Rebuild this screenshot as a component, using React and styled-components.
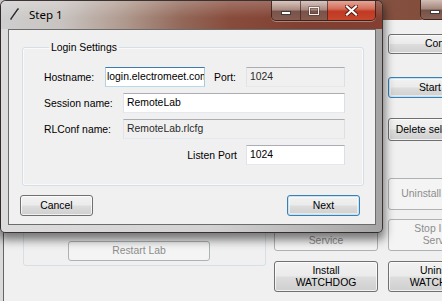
import React from "react";
import styled, { createGlobalStyle, css } from "styled-components";

const GlobalStyle = createGlobalStyle`
  html, body {
    margin: 0;
    padding: 0;
  }
  body {
    width: 442px;
    height: 301px;
    overflow: hidden;
    background: #f0f0f0;
    font-family: "Liberation Sans", Arial, sans-serif;
  }
`;

const Desktop = styled.div`
  position: relative;
  width: 442px;
  height: 301px;
  overflow: hidden;
`;

/* ---------- window behind the dialog ---------- */

const BgWindow = styled.div`
  display: flex;
  flex-direction: column;
  width: 560px;
  height: 301px;
  box-sizing: border-box;
  border-left: 3px solid #dadada;
`;

const BgTitleBar = styled.div`
  flex: none;
  height: 20px;
  display: flex;
  align-items: flex-start;
  padding-left: 417px;
  background: linear-gradient(90deg, #b9b5b2 0%, #9c8478 45%, #85503f 70%, #7e4333 100%);
`;

const BgClient = styled.div`
  flex: 1;
  display: flex;
  align-items: flex-start;
  background: #f0f0f0;
  border-left: 1px solid #646464;
`;

const BgGroup = styled.div`
  box-sizing: border-box;
  width: 243px;
  height: 226px;
  margin: 20px 0 0 19px;
  border: 1px solid #d5dfe5;
  border-radius: 3px;
  display: flex;
  align-items: flex-end;
  padding: 0 0 4px 44px;
`;

const ButtonColumn = styled.div`
  display: flex;
  flex-direction: column;
  width: 104px;
  margin-left: ${props => props.$gap}px;
`;

/* ---------- shared controls ---------- */

const Button = styled.button`
  box-sizing: border-box;
  width: ${props => (props.$w ? `${props.$w}px` : "100%")};
  height: ${props => props.$h || 21}px;
  margin-top: ${props => props.$mt || 0}px;
  padding: 0 2px;
  border: 1px solid #707070;
  border-radius: 3px;
  background: linear-gradient(180deg, #f2f2f2 0%, #ebebeb 48%, #dddddd 52%, #cfcfcf 100%);
  box-shadow: inset 0 0 0 1px rgba(255, 255, 255, 0.7);
  font-family: "Liberation Sans", Arial, sans-serif;
  font-size: 10.4px;
  line-height: 12px;
  color: #000;
  white-space: pre-line;
  overflow: hidden;
  ${props =>
    props.$default &&
    css`
      border-color: #3c7fb1;
      box-shadow: inset 0 0 0 1px #c4e5f6, inset 0 0 0 2px rgba(255, 255, 255, 0.5);
    `}
  ${props =>
    props.disabled &&
    css`
      border-color: #adb2b5;
      background: #f4f4f4;
      box-shadow: none;
      color: #8d8d8d;
    `}
`;

const CaptionGroup = styled.div`
  display: flex;
  height: 19px;
  border: 1px solid rgba(40, 25, 20, 0.75);
  border-top: none;
  border-radius: 0 0 5px 5px;
  overflow: hidden;
  box-shadow: 0 1px 0 rgba(255, 255, 255, 0.35);
`;

const CaptionButton = styled.div`
  width: ${props => props.$w}px;
  height: 19px;
  display: flex;
  align-items: center;
  justify-content: center;
  border-left: ${props => (props.$first ? "none" : "1px solid rgba(40, 25, 20, 0.6)")};
  background: ${props =>
    props.$close
      ? "linear-gradient(180deg, #e6a495 0%, #d3705c 40%, #c13a23 55%, #c6462c 100%)"
      : "linear-gradient(180deg, rgba(235,228,224,0.75) 0%, rgba(190,175,168,0.6) 45%, rgba(110,85,78,0.65) 55%, rgba(140,110,100,0.6) 100%)"};
`;

/* ---------- dialog ---------- */

const Dialog = styled.div`
  position: absolute;
  left: 0;
  top: 0;
  width: 383px;
  height: 233px;
  box-sizing: border-box;
  display: flex;
  flex-direction: column;
  border: 1px solid rgba(30, 22, 20, 0.85);
  border-radius: 6px 6px 5px 5px;
  overflow: hidden;
  background: linear-gradient(90deg, #dcdcdc 0%, #d2d2d2 55%, #a4a4a4 100%);
  box-shadow: 0 5px 10px 2px rgba(0, 0, 0, 0.5);
`;

const TitleBar = styled.div`
  flex: none;
  height: 28px;
  display: flex;
  align-items: flex-start;
  padding: 0 6px 0 9px;
  background: linear-gradient(180deg, rgba(255, 255, 255, 0.22) 0%, rgba(255, 255, 255, 0) 60%),
    linear-gradient(90deg, #cfcfcf 0%, #c8c3c0 16%, #b09a8f 32%, #93695a 47%, #884c3c 60%, #803f31 80%, #843f30 100%);
`;

const TitleIcon = styled.svg`
  flex: none;
  margin-top: 7px;
`;

const TitleText = styled.div`
  margin: 5px 0 0 10px;
  font-family: "Noto Sans", "Open Sans", sans-serif;
  font-size: 11.5px;
  line-height: 17px;
  color: #000;
`;

const TitleSpacer = styled.div`
  flex: 1;
`;

const Frame = styled.div`
  flex: 1;
  display: flex;
  padding: 0 6px 7px 7px;
`;

const Client = styled.div`
  flex: 1;
  box-sizing: border-box;
  display: flex;
  flex-direction: column;
  background: #f0f0f0;
  border: 1px solid #6c6c6c;
`;

const Group = styled.fieldset`
  margin: 11px 11px 0 13px;
  padding: 13px 18px 20px 21px;
  border: 1px solid #d5dfe5;
  border-radius: 3px;
  box-shadow: inset 0 0 0 1px rgba(255, 255, 255, 0.6);
  display: flex;
  flex-direction: column;
  gap: 6px;
  min-width: 0;
`;

const Legend = styled.legend`
  margin-left: 5px;
  padding: 0 2px;
  font-size: 10.4px;
  line-height: 13px;
  color: #000;
`;

const Row = styled.div`
  display: flex;
  align-items: center;
  justify-content: ${props => (props.$end ? "flex-end" : "flex-start")};
  height: 20px;
`;

const Label = styled.label`
  flex: none;
  width: ${props => (props.$w ? `${props.$w}px` : "auto")};
  margin-left: ${props => props.$ml || 0}px;
  margin-right: ${props => props.$mr || 0}px;
  font-size: 10.4px;
  color: #000;
  white-space: nowrap;
`;

const Field = styled.div`
  box-sizing: border-box;
  flex: ${props => (props.$w ? "none" : 1)};
  width: ${props => (props.$w ? `${props.$w}px` : "auto")};
  height: 20px;
  padding-left: ${props => (props.$pl != null ? props.$pl : 3)}px;
  border: 1px solid;
  border-color: #abadb3 #dbdfe6 #e3e9ef #e2e3ea;
  background: ${props => (props.$readOnly ? "#f0f0f0" : "#fff")};
  font-size: 10.4px;
  line-height: 18px;
  color: ${props => (props.$readOnly ? "#2a2a2a" : "#000")};
  white-space: nowrap;
  overflow: hidden;
  ${props =>
    props.$focused &&
    css`
      border-color: #3d7bad #a4c9e3 #b7d9ed #b5cfe7;
    `}
`;

const Scrolled = styled.span`
  display: inline-block;
  margin-left: ${props => props.$shift}px;
`;

const DialogButtons = styled.div`
  display: flex;
  justify-content: space-between;
  margin-top: 9px;
  padding: 0 15px 0 11px;
`;

const MinGlyph = () => (
  <svg width="12" height="12" viewBox="0 0 12 12">
    <rect x="1.5" y="6.5" width="9" height="3" fill="#fff" stroke="#3b3b3b" strokeWidth="1" />
  </svg>
);

const MaxGlyph = () => (
  <svg width="12" height="10" viewBox="0 0 12 10">
    <rect x="1.5" y="1.5" width="9" height="7" fill="none" stroke="rgba(60,50,45,0.55)" strokeWidth="2.4" />
    <rect x="1.5" y="1.5" width="9" height="7" fill="none" stroke="#f4f0ee" strokeWidth="1" />
  </svg>
);

const CloseGlyph = () => (
  <svg width="13" height="11" viewBox="0 0 13 11">
    <path d="M2 1.5 L11 9.5 M11 1.5 L2 9.5" stroke="#5a1a10" strokeWidth="4" strokeLinecap="square" />
    <path d="M2 1.5 L11 9.5 M11 1.5 L2 9.5" stroke="#fff" strokeWidth="2.2" strokeLinecap="square" />
  </svg>
);

const App = () => (
  <Desktop>
    <GlobalStyle />

    <BgWindow>
      <BgTitleBar>
        <CaptionGroup>
          <CaptionButton $w={28} $first>
            <MinGlyph />
          </CaptionButton>
          <CaptionButton $w={26}>
            <MaxGlyph />
          </CaptionButton>
          <CaptionButton $w={46} $close>
            <CloseGlyph />
          </CaptionButton>
        </CaptionGroup>
      </BgTitleBar>
      <BgClient>
        <BgGroup>
          <Button $w={142} $h={20} disabled>
            Restart Lab
          </Button>
        </BgGroup>
        <ButtonColumn $gap={8}>
          <Button $mt={158} $h={32} disabled>
            {"Start\nService"}
          </Button>
          <Button $mt={9} $h={32} disabled>
            {"Install\nService"}
          </Button>
          <Button $mt={10} $h={31}>
            {"Install\nWATCHDOG"}
          </Button>
        </ButtonColumn>
        <ButtonColumn $gap={10}>
          <Button $mt={14} $h={20}>
            Config
          </Button>
          <Button $mt={23} $h={21} $default>
            Start Lab
          </Button>
          <Button $mt={20} $h={23}>
            Delete selected lab
          </Button>
          <Button $mt={37} $h={32} disabled>
            Uninstall Service
          </Button>
          <Button $mt={9} $h={32} disabled>
            {"Stop Install\nService"}
          </Button>
          <Button $mt={10} $h={31}>
            {"Uninstall\nWATCHDOG"}
          </Button>
        </ButtonColumn>
      </BgClient>
    </BgWindow>

    <Dialog>
      <TitleBar>
        <TitleIcon width="9" height="12" viewBox="0 0 9 12">
          <path d="M1 11 L8 1" stroke="#2b2b2b" strokeWidth="1.6" strokeLinecap="round" />
          <path d="M2 11 L8.5 2" stroke="rgba(255,255,255,0.5)" strokeWidth="0.8" />
        </TitleIcon>
        <TitleText>Step 1</TitleText>
        <TitleSpacer />
        <CaptionGroup>
          <CaptionButton $w={28} $first>
            <MinGlyph />
          </CaptionButton>
          <CaptionButton $w={26}>
            <MaxGlyph />
          </CaptionButton>
          <CaptionButton $w={47} $close>
            <CloseGlyph />
          </CaptionButton>
        </CaptionGroup>
      </TitleBar>
      <Frame>
        <Client>
          <Group>
            <Legend>Login Settings</Legend>
            <Row>
              <Label $w={61}>Hostname:</Label>
              <Field $w={100} $pl={2} $focused>
                <Scrolled $shift={-1}>login.electromeet.com</Scrolled>
              </Field>
              <Label $w={32} $ml={9}>
                Port:
              </Label>
              <Field $w={99} $readOnly>
                1024
              </Field>
            </Row>
            <Row>
              <Label $w={79}>Session name:</Label>
              <Field>RemoteLab</Field>
            </Row>
            <Row>
              <Label $w={79}>RLConf name:</Label>
              <Field $readOnly>RemoteLab.rlcfg</Field>
            </Row>
            <Row $end>
              <Label $mr={9}>Listen Port</Label>
              <Field $w={99}>1024</Field>
            </Row>
          </Group>
          <DialogButtons>
            <Button $w={73} $h={21}>
              Cancel
            </Button>
            <Button $w={73} $h={21} $default>
              Next
            </Button>
          </DialogButtons>
        </Client>
      </Frame>
    </Dialog>
  </Desktop>
);

export default App;
